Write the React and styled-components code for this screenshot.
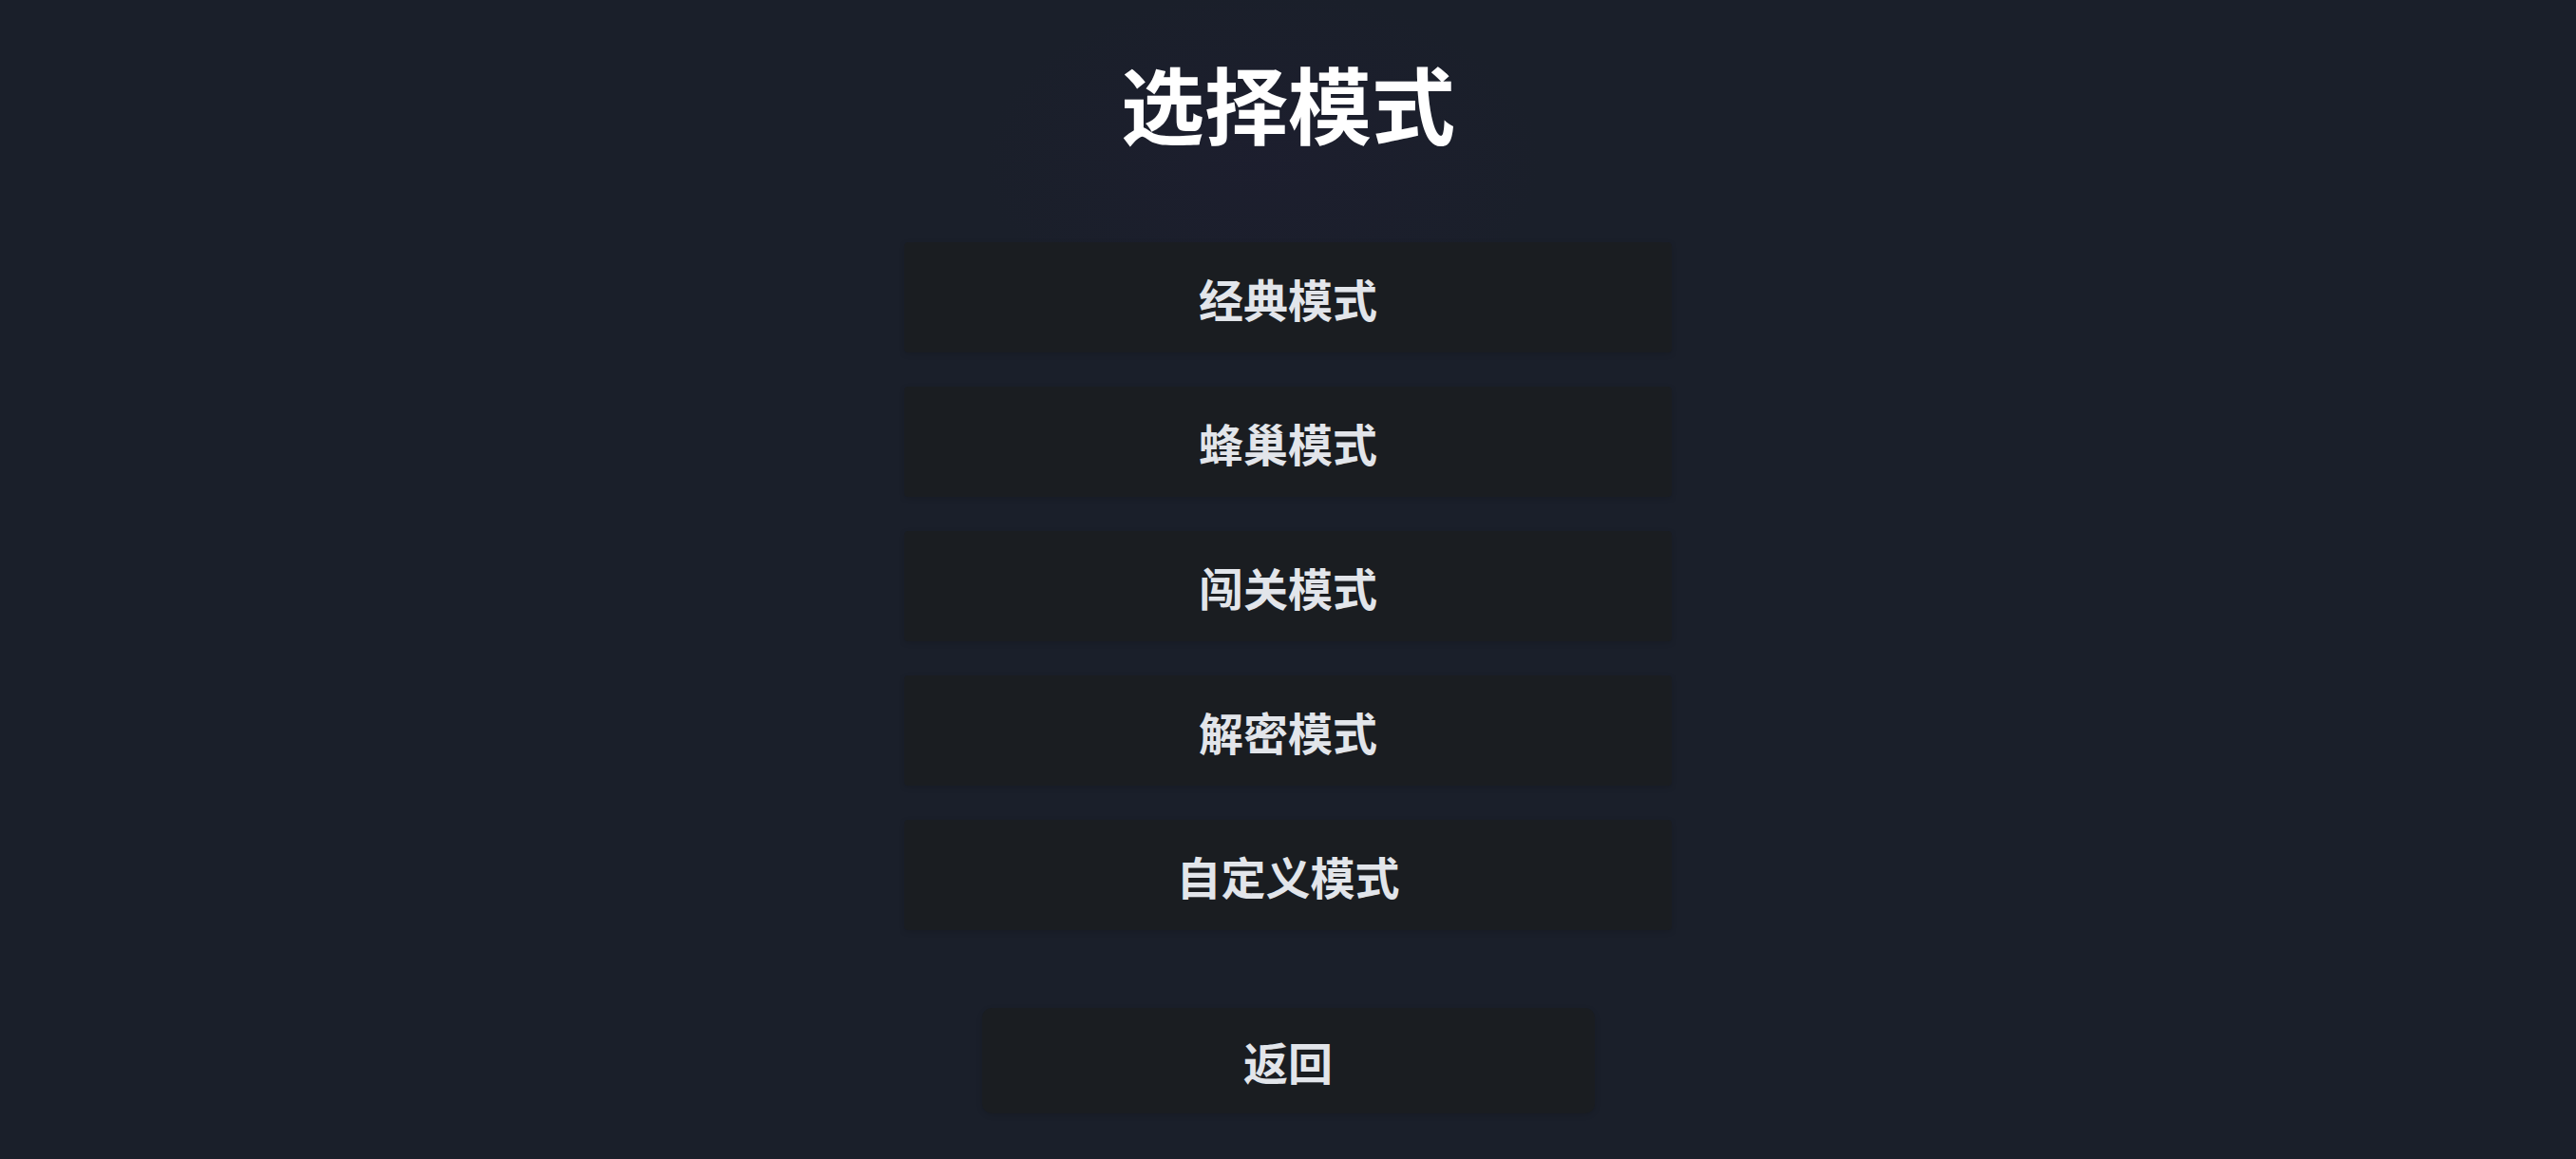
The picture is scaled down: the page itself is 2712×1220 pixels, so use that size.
import styled, { createGlobalStyle } from "styled-components";

const GlobalStyle = createGlobalStyle`
  html, body {
    margin: 0;
    padding: 0;
    background: #1a1f2a;
    overflow: hidden;
  }
  * {
    box-sizing: border-box;
  }
`;

const Page = styled.div`
  display: flex;
  flex-direction: column;
  align-items: center;
  width: 100%;
  height: 1220px;
  overflow: hidden;
  padding-top: 47px;
  background: radial-gradient(
      ellipse 420px 260px at 49% 14%,
      rgba(36, 28, 58, 0.25),
      transparent 70%
    ),
    #1a1f2a;
  font-family: "Noto Sans CJK SC", "Noto Sans", sans-serif;
`;

const Title = styled.h1`
  margin: 0 0 88px 0;
  color: #ffffff;
  font-size: 88px;
  font-weight: 700;
  line-height: 120px;
  letter-spacing: 0;
`;

const ModeList = styled.div`
  display: flex;
  flex-direction: column;
  gap: 36px;
`;

const ModeBtn = styled.button`
  display: flex;
  justify-content: center;
  align-items: center;
  width: ${(props) => (props.$back ? "645px" : "808px")};
  height: ${(props) => (props.$back ? "111px" : "116px")};
  margin-top: ${(props) => (props.$back ? "82px" : "0")};
  border: none;
  border-radius: ${(props) => (props.$back ? "10px" : "4px")};
  background-color: #1a1d21;
  box-shadow: 0 2px 6px rgba(0, 0, 0, 0.12);
  color: #e2e5ea;
  font-family: "Noto Sans CJK SC", "Noto Sans", sans-serif;
  font-size: 47px;
  font-weight: 600;
  cursor: pointer;
`;

const modes = ["经典模式", "蜂巢模式", "闯关模式", "解密模式", "自定义模式"];

const App = () => {
  return (
    <Page>
      <GlobalStyle />
      <Title>选择模式</Title>
      <ModeList>
        {modes.map((m) => (
          <ModeBtn key={m}>{m}</ModeBtn>
        ))}
      </ModeList>
      <ModeBtn $back>返回</ModeBtn>
    </Page>
  );
};

export default App;
